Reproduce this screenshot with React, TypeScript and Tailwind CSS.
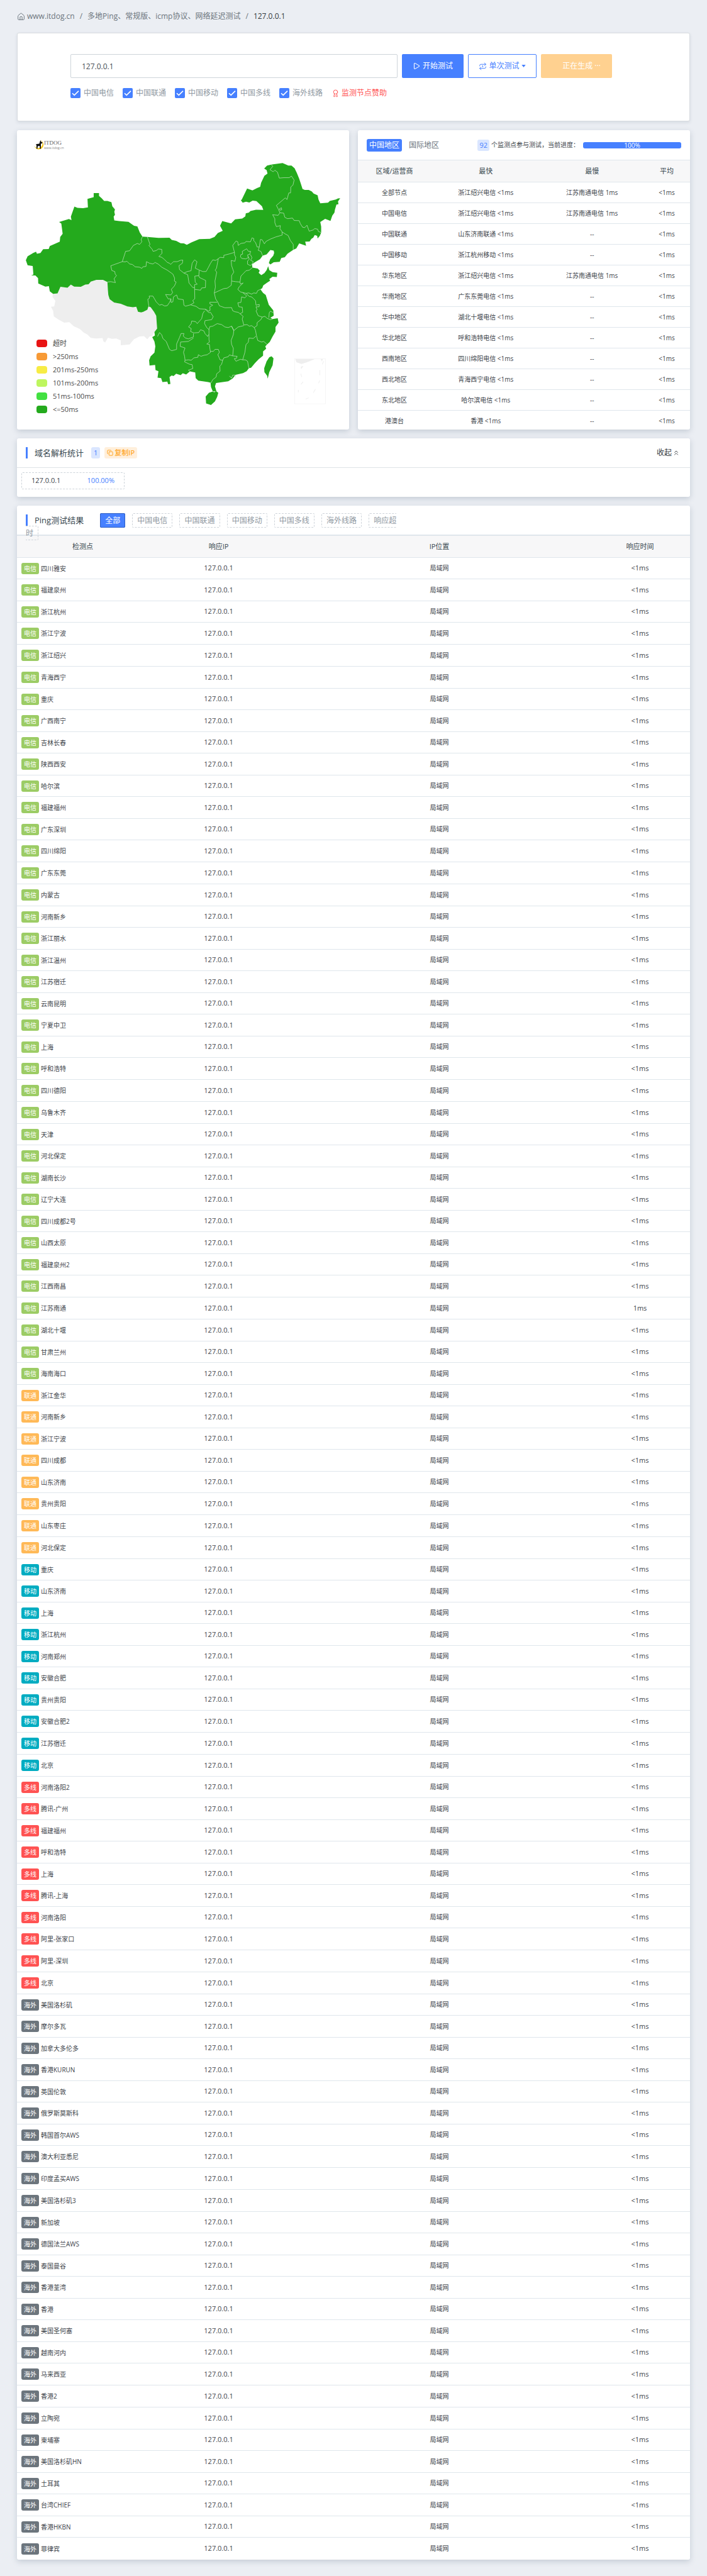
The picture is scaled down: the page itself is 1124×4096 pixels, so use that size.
import React from "react";
import { Award, ChevronsUp, Copy, House, Play, Repeat1 } from "lucide-react";

const GREEN =
  "M348,346 372,346 372,360 384,372 395,385 410,385 428,392 432,412 444,428 441,440 444,455 438,465 441,484 463,487 505,491 530,511 545,514 556,545 568,566 590,567 640,572 690,571 700,582 720,587 740,599 755,600 768,607 790,594 824,578 872,577 893,567 908,547 930,536 918,511 928,487 968,499 986,478 1018,474 1032,463 1034,448 1048,444 1055,436 1080,430 1113,431 1107,412 1082,386 1065,384 1050,393 1035,389 1020,394 1012,382 1016,378 1040,323 1064,332 1085,320 1099,314 1103,294 1118,258 1132,247 1128,230 1117,222 1130,207 1152,201 1200,194 1226,207 1240,207 1254,220 1264,243 1275,273 1282,297 1290,325 1300,330 1318,330 1332,338 1340,348 1358,357 1362,378 1370,397 1405,394 1413,385 1440,378 1450,373 1460,372 1450,388 1452,402 1443,404 1436,430 1434,444 1424,460 1416,486 1392,476 1370,492 1374,515 1374,545 1368,562 1358,575 1356,562 1345,558 1338,571 1330,577 1322,590 1302,591 1306,612 1275,600 1262,625 1248,632 1222,652 1210,670 1194,674 1187,693 1160,695 1145,706 1138,699 1144,680 1158,662 1162,648 1160,636 1145,633 1128,655 1110,662 1098,680 1075,695 1062,705 1064,722 1088,727 1097,738 1092,748 1104,760 1118,750 1128,735 1135,715 1140,735 1155,745 1176,748 1174,770 1155,768 1140,780 1144,788 1130,798 1113,812 1108,826 1100,832 1112,850 1124,860 1138,910 1158,938 1160,965 1145,975 1155,982 1178,978 1182,1000 1168,1022 1168,1045 1155,1070 1142,1098 1130,1110 1122,1120 1126,1132 1112,1145 1112,1167 1092,1185 1075,1205 1058,1228 1048,1230 1038,1245 1022,1255 988,1264 975,1282 955,1296 920,1302 900,1305 895,1322 902,1348 885,1347 877,1325 875,1303 864,1300 845,1297 820,1293 808,1280 806,1252 782,1246 765,1262 750,1256 740,1265 720,1258 708,1270 700,1267 690,1275 694,1310 684,1311 680,1298 658,1300 652,1280 636,1278 640,1245 627,1240 625,1214 600,1217 598,1190 605,1170 622,1152 626,1120 622,1095 612,1073 624,1065 622,1048 634,1030 630,965 620,945 605,922 595,918 590,935 572,945 562,948 548,945 540,920 525,922 500,918 470,905 440,898 420,882 414,860 412,835 410,795 390,784 360,784 335,793 325,806 310,808 290,819 260,818 245,808 230,824 198,819 185,852 165,855 150,842 146,816 130,818 98,802 97,775 85,762 66,762 76,757 73,714 50,710 42,685 50,665 75,648 88,642 92,652 108,648 120,629 145,628 150,613 195,591 197,567 208,551 202,500 192,492 236,477 248,482 245,465 261,414 275,420 300,422 322,418 320,375 348,366Z";

const HAINAN = "M853,1373 868,1354 885,1348 892,1352 900,1346 910,1354 905,1375 895,1398 877,1416 855,1408Z";
const TAIWAN = "M1150,1170 1159,1180 1155,1215 1140,1250 1133,1283 1130,1268 1118,1250 1117,1230 1128,1195 1140,1175Z";
const TIBET =
  "M198,819 230,824 245,808 260,818 290,819 310,808 325,806 335,793 360,784 390,784 410,795 412,835 414,860 420,882 440,898 470,905 500,918 525,922 540,920 548,945 562,948 572,945 590,935 595,918 605,922 620,945 630,965 633,1035 620,1050 612,1068 600,1070 590,1084 575,1068 555,1070 530,1083 510,1110 470,1114 470,1090 450,1080 430,1082 412,1076 400,1100 392,1095 388,1078 360,1080 335,1077 320,1060 303,1050 285,1032 258,1018 238,998 215,1000 190,985 168,968 165,940 155,920 170,918 175,890 162,870 165,855 185,852Z";

const BORDERS = [
  "568,566 562,580 565,592 555,605 545,600 527,610 510,637 492,640 477,692 425,713 430,737 443,742 445,755 451,762 440,778 446,798 425,793 410,795",
  "477,692 490,693 498,690 510,704 522,706 535,718 555,720 565,726 570,718 584,716 586,692 600,700 615,704 625,696 640,705 655,720 680,735 705,755 713,775 712,790 720,795 712,815 698,832 704,848 696,860 672,858 684,880 697,880 690,898 680,914 668,916 655,908 645,912 630,895 615,866 598,866 600,876 592,882 597,918",
  "590,567 602,605 597,610 612,630 616,640 630,636 640,628 655,630 656,650 642,666 655,670 668,682 680,696 690,700 695,706 708,692 725,692 740,685 750,684 748,700 733,712 735,732 755,750",
  "755,750 770,742 787,738 792,700 803,683 814,692 806,725 825,735 840,742 855,742 865,722 875,700 885,683 898,686 910,677",
  "755,750 772,758 778,800 795,823 803,823 803,808 815,806 806,795 804,765 822,763 824,736",
  "822,763 825,772 853,787 852,823 835,825 830,836 803,832",
  "803,823 804,880 795,888 800,900 785,910 762,917 755,912 752,884 728,880 722,860 708,870 705,895 697,898 696,880",
  "910,677 902,725 896,735 903,745 895,790 897,820 892,850",
  "910,677 918,670 935,672 935,660 960,653 983,645",
  "983,645 983,658 989,670 985,690 968,686 970,712 980,745 970,762 970,790 968,812 950,826 935,828 892,850",
  "983,645 975,610 990,588 998,592 1000,610 1012,600 1030,597 1035,590 1055,592 1062,572 1070,575 1070,587 1078,595 1085,618 1095,618 1090,635 1102,640 1110,662",
  "1095,618 1100,580 1108,582 1118,602 1125,590 1145,578 1170,567 1198,558 1198,542",
  "1010,668 1012,656 1020,654 1018,640 1038,627 1046,640 1056,640 1052,655 1042,658 1045,672 1034,678 1016,676Z",
  "1045,665 1050,680 1042,688 1042,705 1055,712 1062,705 1068,692 1056,685 1062,672 1055,656",
  "1064,722 1050,735 1035,738 1025,750 1012,765 1008,795 988,793 970,790",
  "1008,795 1010,805 1022,800 1005,818 998,832 1010,845 1020,848 1035,852 1048,850 1060,856 1070,850 1082,852 1088,838 1100,832",
  "892,850 898,880 908,897 915,915 940,925 970,924 975,940 985,945 1000,948 1008,955 1020,948 1018,922 1003,920 998,900 1012,898 1015,870 1030,875 1038,865 1020,848",
  "1035,852 1050,868 1060,870 1070,880 1078,890 1080,912 1095,908 1094,920 1080,920 1085,935 1080,940 1090,965 1108,972",
  "1108,972 1102,985 1085,1000 1085,1015 1072,1025 1078,1040 1082,1065 1088,1090 1105,1098 1115,1095 1130,1110",
  "1138,975 1140,950 1145,942 1158,950",
  "1108,972 1120,968 1130,978 1145,985 1155,982",
  "1008,955 1022,968 1018,982 1025,1012 1040,1010 1050,1018 1060,1015 1072,1025",
  "850,990 848,1005 858,1025 868,1035 872,1020 885,1018 905,1005 925,1010 940,1022 955,1025 970,1018 980,1040 1000,1022 1025,1015",
  "785,910 810,918 825,930 850,932 868,950 875,948 887,970 880,985 850,990",
  "850,932 858,935 865,942 873,938 872,920 885,912 872,905 872,897 905,897",
  "848,940 840,955 835,980 815,1005 808,995 790,992 788,1005 776,1022 788,1030 785,1045 800,1052",
  "800,1052 822,1050 830,1036 845,1042 850,1055 862,1070 866,1060",
  "636,1070 645,1050 655,1062 660,1080 675,1095 690,1135 700,1142 722,1135 722,1108 735,1075 742,1055 755,1055 752,1068 762,1078 775,1082 798,1072 798,1055",
  "798,1078 775,1095 740,1098 738,1120 760,1128 753,1150 758,1170 760,1190",
  "760,1190 775,1188 788,1190 800,1178 818,1175 820,1162 832,1170 845,1165 860,1162 875,1150",
  "868,1035 868,1085 870,1098 858,1108 870,1110 872,1130 875,1150",
  "875,1145 888,1145 895,1135 910,1135 915,1150 908,1162 918,1188 930,1190 935,1178 955,1172 960,1163 975,1168",
  "970,1018 980,1040 978,1060 968,1090 970,1110 978,1130 975,1168",
  "975,1168 995,1170 992,1180 982,1182 990,1195 1010,1185 1020,1188",
  "1080,1068 1068,1080 1048,1078 1045,1100 1035,1110 1030,1150 1020,1188",
  "1020,1188 1032,1188 1042,1195 1048,1230",
  "930,1190 925,1210 917,1220 918,1245 903,1258 900,1275 885,1288 877,1305",
  "760,1190 758,1198 780,1210 792,1212 795,1232 775,1240 782,1246",
  "1148,201 1156,210 1143,228 1158,238 1165,230 1177,240 1185,270 1205,268 1230,268 1240,260 1252,280 1247,305 1237,315 1236,345 1228,345 1220,378 1212,370 1172,408 1180,425 1188,445",
  "1186,425 1195,420 1196,430 1188,432Z",
  "1188,445 1205,447 1210,468 1222,475 1245,472 1252,484 1275,485 1280,500 1290,518 1300,520 1310,508 1320,538 1338,532 1345,525 1358,528 1362,540 1374,545",
  "1188,445 1180,458 1155,455 1165,475 1165,495 1172,515 1190,510 1188,525 1198,542",
  "1198,542 1212,552 1225,560 1235,585 1248,605 1248,632",
  "960,1270 970,1280 975,1265 988,1265 988,1278",
];

const legend = [
  ["超时", "bg-[#e81414]"],
  [">250ms", "bg-[#f79a36]"],
  ["201ms-250ms", "bg-[#f7ec45]"],
  ["101ms-200ms", "bg-[#bef65f]"],
  ["51ms-100ms", "bg-[#42e041]"],
  ["<=50ms", "bg-[#24aa1d]"],
];

const regions = [
  ["全部节点", "浙江绍兴电信 <1ms", "江苏南通电信 1ms"],
  ["中国电信", "浙江绍兴电信 <1ms", "江苏南通电信 1ms"],
  ["中国联通", "山东济南联通 <1ms", "--"],
  ["中国移动", "浙江杭州移动 <1ms", "--"],
  ["华东地区", "浙江绍兴电信 <1ms", "江苏南通电信 1ms"],
  ["华南地区", "广东东莞电信 <1ms", "--"],
  ["华中地区", "湖北十堰电信 <1ms", "--"],
  ["华北地区", "呼和浩特电信 <1ms", "--"],
  ["西南地区", "四川绵阳电信 <1ms", "--"],
  ["西北地区", "青海西宁电信 <1ms", "--"],
  ["东北地区", "哈尔滨电信 <1ms", "--"],
  ["港澳台", "香港 <1ms", "--"],
];

const groups: { carrier: string; color: string; nodes: string }[] = [
  {
    carrier: "电信",
    color: "bg-[#9ccc65]",
    nodes:
      "四川雅安 福建泉州 浙江杭州 浙江宁波 浙江绍兴 青海西宁 重庆 广西南宁 吉林长春 陕西西安 哈尔滨 福建福州 广东深圳 四川绵阳 广东东莞 内蒙古 河南新乡 浙江丽水 浙江温州 江苏宿迁 云南昆明 宁夏中卫 上海 呼和浩特 四川德阳 乌鲁木齐 天津 河北保定 湖南长沙 辽宁大连 四川成都2号 山西太原 福建泉州2 江西南昌 江苏南通 湖北十堰 甘肃兰州 海南海口",
  },
  {
    carrier: "联通",
    color: "bg-[#ffb957]",
    nodes: "浙江金华 河南新乡 浙江宁波 四川成都 山东济南 贵州贵阳 山东枣庄 河北保定",
  },
  {
    carrier: "移动",
    color: "bg-[#00acc1]",
    nodes: "重庆 山东济南 上海 浙江杭州 河南郑州 安徽合肥 贵州贵阳 安徽合肥2 江苏宿迁 北京",
  },
  {
    carrier: "多线",
    color: "bg-[#ff5252]",
    nodes: "河南洛阳2 腾讯-广州 福建福州 呼和浩特 上海 腾讯-上海 河南洛阳 阿里-张家口 阿里-深圳 北京",
  },
  {
    carrier: "海外",
    color: "bg-[#6c757d]",
    nodes:
      "美国洛杉矶 摩尔多瓦 加拿大多伦多 香港KURUN 英国伦敦 俄罗斯莫斯科 韩国首尔AWS 澳大利亚悉尼 印度孟买AWS 美国洛杉矶3 新加坡 德国法兰AWS 泰国曼谷 香港荃湾 香港 美国圣何塞 越南河内 马来西亚 香港2 立陶宛 柬埔寨 美国洛杉矶HN 土耳其 台湾CHIEF 香港HKBN 菲律宾",
  },
];

const rows = groups.flatMap((g) =>
  g.nodes.split(" ").map((name) => ({
    carrier: g.carrier,
    color: g.color,
    name,
    time: g.carrier === "电信" && name === "江苏南通" ? "1ms" : "<1ms",
  })),
);

const card = "rounded-[3px] bg-white shadow-[0_3px_10px_rgba(60,80,110,0.22)]";

function Breadcrumb() {
  return (
    <nav className="flex h-[52px] items-center text-[12px] text-[#6c757d]">
      <a href="#" className="flex items-center gap-[3px]">
        <House className="size-[13px]" strokeWidth={1.8} />
        www.itdog.cn
      </a>
      <span className="mx-2">/</span>
      <a href="#">多地Ping、常规版、icmp协议、网络延迟测试</a>
      <span className="mx-2">/</span>
      <span className="text-[#343a40]">127.0.0.1</span>
    </nav>
  );
}

function SearchCard() {
  return (
    <section className="rounded-[3px] border border-[#d8dbdf] bg-white px-[84px] pt-[33px] pb-[36px] shadow-[0_2px_5px_rgba(60,80,110,0.12)]">
      <div className="flex gap-[7px] text-[12px]">
        <input
          aria-label="测试地址"
          defaultValue="127.0.0.1"
          className="h-[38px] w-[520px] rounded-[2px] border border-[#ced4da] px-[17px] text-[#495057]"
        />
        <button className="flex h-[38px] w-[98px] items-center justify-center gap-1 rounded-[2px] bg-[#4680ff] text-white">
          <Play className="size-[12px]" strokeWidth={2.2} />
          开始测试
        </button>
        <button className="flex h-[38px] w-[109px] items-center justify-center gap-[3px] rounded-[2px] border border-[#4680ff] text-[#4680ff]">
          <Repeat1 className="size-[13px]" strokeWidth={1.8} />
          单次测试
          <svg viewBox="0 0 8 5" className="h-[4px] w-[7px]" fill="currentColor">
            <path d="M0 0h8L4 5z" />
          </svg>
        </button>
        <button className="h-[38px] w-[113px] rounded-[2px] bg-[#ffd190] pl-[16px] text-white">正在生成 ···</button>
      </div>
      <div className="mt-[16px] flex items-center text-[12px] leading-[16px] text-[#8f98a1]">
        {["中国电信", "中国联通", "中国移动", "中国多线", "海外线路"].map((name) => (
          <label key={name} className="relative mr-[14px] flex items-center gap-[5px]">
            <input type="checkbox" defaultChecked className="size-[16px] appearance-none rounded-[2px] bg-[#4680ff]" />
            <svg viewBox="0 0 16 16" className="pointer-events-none absolute left-0 top-0 size-[16px]" fill="none" stroke="white" strokeWidth="1.6">
              <path d="M3 8.2l3.2 3.2L13 4.6" />
            </svg>
            {name}
          </label>
        ))}
        <a href="#" className="flex items-center gap-[3px] text-[#ff5252]">
          <Award className="size-[13px]" strokeWidth={1.8} />
          监测节点赞助
        </a>
      </div>
    </section>
  );
}

function MapCard() {
  return (
    <section className={"relative overflow-hidden " + card}>
      <svg viewBox="2 28 1498 1512" preserveAspectRatio="none" className="block h-[476px] w-full">
        <path d={TIBET} fill="#eeeeee" />
        <path d={GREEN} fill="#24aa1d" />
        <path d={HAINAN} fill="#24aa1d" />
        <path d={TAIWAN} fill="#24aa1d" />
        {BORDERS.map((d) => (
          <path key={d} d={"M" + d} fill="none" stroke="#cfe8cd" strokeWidth="2" strokeLinejoin="round" />
        ))}
        <rect x="1254" y="1182" width="139" height="228" fill="none" stroke="#f1f1f1" strokeWidth="2" />
        <path d="M1258,1184 1345,1184 1310,1200 1285,1209 1262,1200Z M1372,1184h10l-5,12Z M1282,1222l12,-3 -10,16Z" fill="#eeeeee" />
        <path
          d="M1385,1195l-6,16 M1368,1240v26 M1368,1292l-6,14 M1348,1336l-9,18 M1318,1380l-14,6 M1271,1352v-12 M1283,1312l9,-13 M1282,1258l4,16"
          stroke="#efefef"
          strokeWidth="3"
        />
      </svg>
      <div className="absolute left-[27px] top-[15px] flex items-center">
        <svg viewBox="0 0 32 32" className="size-[16px]">
          <path d="M18 1a15 15 0 1 1-17 19a14 14 0 0 0 22 3a13 13 0 0 0-5-22z" fill="#f4c20d" />
          <path d="M21 2l2 5 4 2-1 3-4 1v16h-3l-1-9-6 1-1 8H8V18l-2-3 3-1 8-1 2-7z" fill="#111" />
        </svg>
        <div className="text-[#666]">
          <div className="font-['Liberation_Serif',serif] text-[9px] leading-[9px]">ITDOG</div>
          <div className="text-[5px] leading-[6px] text-[#888]">www.itdog.cn</div>
        </div>
      </div>
      <ul className="absolute left-[31px] top-[333px] flex flex-col gap-[9px] text-[11px] leading-[12px] text-[#4a4a4a]">
        {legend.map(([label, color]) => (
          <li key={label} className="flex items-center gap-[9px]">
            <span className={"h-[12px] w-[17px] rounded-[4px] " + color} />
            {label}
          </li>
        ))}
      </ul>
    </section>
  );
}

function RegionCard() {
  return (
    <section className={"overflow-hidden " + card}>
      <header className="flex h-[47px] items-center pl-[14px] pr-[14px]">
        <button className="h-[20px] rounded-[3px] bg-[#4680ff] px-[4px] text-[12px] leading-[20px] text-white">中国地区</button>
        <button className="ml-[11px] text-[12px] leading-[20px] text-[#6c757d]">国际地区</button>
        <div className="ml-auto flex items-center text-[10px] text-[#3e444b]">
          <span className="rounded-[3px] bg-[#dae6ff] px-[3px] text-[11px] leading-[18px] text-[#4680ff]">92</span>
          <span className="ml-[3px]">个监测点参与测试，当前进度：</span>
        </div>
        <div role="progressbar" aria-label="当前进度" aria-valuenow={100} className="ml-[6px] h-[10px] w-[156px] rounded-[3px] bg-[#4680ff] text-center text-[10px] leading-[10px] text-white">
          100%
        </div>
      </header>
      <div className="h-[429px] overflow-hidden">
        <table className="w-full table-fixed border-separate border-spacing-0 text-center text-[10px] text-[#3e444b]">
          <colgroup>
            <col className="w-[22%]" />
            <col className="w-[33%]" />
            <col className="w-[31%]" />
            <col className="w-[14%]" />
          </colgroup>
          <thead>
            <tr>
              {["区域/运营商", "最快", "最慢", "平均"].map((h) => (
                <th key={h} className="h-[36px] border-y border-[#dfe6ec] bg-[#f7f7f8] text-[11px] font-normal text-[#37474f]">
                  {h}
                </th>
              ))}
            </tr>
          </thead>
          <tbody>
            {regions.map(([area, fast, slow]) => (
              <tr key={area} className="h-[33px]">
                <td className="border-b border-[#dfe6ec]">{area}</td>
                <td className="border-b border-[#dfe6ec]">{fast}</td>
                <td className="border-b border-[#dfe6ec]">{slow}</td>
                <td className="border-b border-[#dfe6ec]">&lt;1ms</td>
              </tr>
            ))}
          </tbody>
        </table>
      </div>
    </section>
  );
}

function StatsCard() {
  return (
    <section className={"mt-[14px] " + card}>
      <header className="flex h-[47px] items-center border-b border-[#dfe3e6] pl-[14px] pr-[16px]">
        <h2 className="border-l-[3px] border-[#4680ff] pl-[11px] text-[13px] leading-[18px] text-[#37474f]">域名解析统计</h2>
        <span className="ml-[12px] rounded-[3px] bg-[#dae6ff] px-[4px] text-[11px] leading-[18px] text-[#4680ff]">1</span>
        <button className="ml-[7px] flex items-center gap-[2px] rounded-[3px] bg-[#ffefdb] px-[4px] text-[11px] leading-[18px] text-[#ff9800]">
          <Copy className="size-[10px]" strokeWidth={2} />
          复制IP
        </button>
        <button className="ml-auto flex items-center gap-[1px] text-[12px] text-[#343a40]">
          收起
          <ChevronsUp className="size-[12px]" strokeWidth={1.8} />
        </button>
      </header>
      <div className="px-[7px] pt-[7px] pb-[12px]">
        <div className="flex h-[27px] w-[164px] items-center justify-between rounded-[2px] border border-dashed border-[#ced4da] px-[15px] text-[11px]">
          <span className="text-[#3e444b]">127.0.0.1</span>
          <span className="text-[#4680ff]">100.00%</span>
        </div>
      </div>
    </section>
  );
}

function ResultsCard() {
  return (
    <section className={"mt-[14px] overflow-hidden " + card}>
      <header className="h-[46px] px-[14px] pt-[13px]">
        <div className="relative z-10 max-w-[590px] leading-[19px]">
          <h2 className="mr-[18px] inline-block border-l-[3px] border-[#4680ff] pl-[11px] text-[13px] leading-[18px] text-[#37474f]">Ping测试结果</h2>
          <a href="#" className="ml-[8px] whitespace-nowrap rounded-[2px] border border-[#2f5fc4] bg-[#4680ff] px-[7px] py-[2px] text-[12px] text-white">全部</a>
          {["中国电信", "中国联通", "中国移动", "中国多线", "海外线路"].map((t) => (
            <React.Fragment key={t}>
              {" "}
              <a href="#" className="ml-[7px] whitespace-nowrap rounded-[2px] border border-dashed border-[#ced4da] px-[7px] py-[2px] text-[12px] text-[#8f98a1]">{t}</a>
            </React.Fragment>
          ))}{" "}
          <a href="#" className="ml-[7px] rounded-[2px] border border-dashed border-[#ced4da] px-[7px] py-[2px] text-[12px] text-[#8f98a1]">响应超时</a>
        </div>
      </header>
      <table className="w-full table-fixed border-separate border-spacing-0 border-t border-[#dfe6ec] text-center text-[10px] text-[#3e444b]">
        <colgroup>
          <col className="w-[209px]" />
          <col className="w-[223px]" />
          <col />
          <col className="w-[159px]" />
        </colgroup>
        <thead>
          <tr>
            {["检测点", "响应IP", "IP位置", "响应时间"].map((h) => (
              <th key={h} className="h-[36px] border-y border-[#dfe6ec] bg-[#f7f7f8] text-[11px] font-normal text-[#37474f]">
                {h}
              </th>
            ))}
          </tr>
        </thead>
        <tbody>
          {rows.map((r, i) => (
            <tr key={i} className="odd:h-[34px] even:h-[35px] [&:nth-child(10n+5)]:h-[35px] [&:last-child>td]:border-b-0 [&>td]:border-b [&>td]:border-[#dfe6ec]">
              <td className="pl-[7px] text-left">
                <span className={"mr-[3px] inline-block rounded-[3px] px-[4px] leading-[18px] text-white " + r.color}>{r.carrier}</span>
                {r.name}
              </td>
              <td className="text-[11px]">127.0.0.1</td>
              <td>局域网</td>
              <td className="text-[11px]">{r.time}</td>
            </tr>
          ))}
        </tbody>
      </table>
    </section>
  );
}

export default function App() {
  return (
    <main className="min-h-screen bg-[#ebeef3] px-[27px] pb-[27px] font-['Open_Sans','Noto_Sans_CJK_SC',sans-serif]">
      <Breadcrumb />
      <SearchCard />
      <div className="mt-[14px] grid grid-cols-2 gap-[14px]">
        <MapCard />
        <RegionCard />
      </div>
      <StatsCard />
      <ResultsCard />
    </main>
  );
}
